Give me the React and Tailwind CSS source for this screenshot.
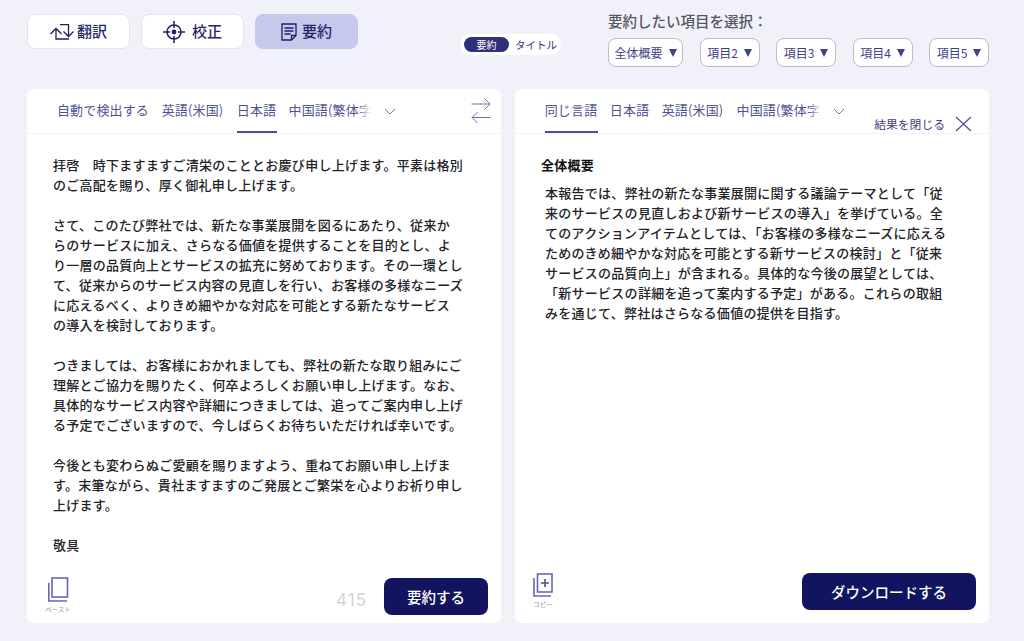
import React from "react";

const FONT = { fontFamily: '"Noto Sans CJK JP", "Inter", sans-serif' };

const leftText = [
  "拝啓　時下ますますご清栄のこととお慶び申し上げます。平素は格別",
  "のご高配を賜り、厚く御礼申し上げます。",
  "",
  "さて、このたび弊社では、新たな事業展開を図るにあたり、従来か",
  "らのサービスに加え、さらなる価値を提供することを目的とし、よ",
  "り一層の品質向上とサービスの拡充に努めております。その一環とし",
  "て、従来からのサービス内容の見直しを行い、お客様の多様なニーズ",
  "に応えるべく、よりきめ細やかな対応を可能とする新たなサービス",
  "の導入を検討しております。",
  "",
  "つきましては、お客様におかれましても、弊社の新たな取り組みにご",
  "理解とご協力を賜りたく、何卒よろしくお願い申し上げます。なお、",
  "具体的なサービス内容や詳細につきましては、追ってご案内申し上げ",
  "る予定でございますので、今しばらくお待ちいただければ幸いです。",
  "",
  "今後とも変わらぬご愛顧を賜りますよう、重ねてお願い申し上げま",
  "す。末筆ながら、貴社ますますのご発展とご繁栄を心よりお祈り申し",
  "上げます。",
  "",
  "敬具",
];

const rightText = [
  "本報告では、弊社の新たな事業展開に関する議論テーマとして「従",
  "来のサービスの見直しおよび新サービスの導入」を挙げている。全",
  "てのアクションアイテムとしては、「お客様の多様なニーズに応える",
  "ためのきめ細やかな対応を可能とする新サービスの検討」と「従来",
  "サービスの品質向上」が含まれる。具体的な今後の展望としては、",
  "「新サービスの詳細を追って案内する予定」がある。これらの取組",
  "みを通じて、弊社はさらなる価値の提供を目指す。",
];

function TranslateIcon() {
  return (
    <svg width="24" height="16" viewBox="0 0 24 16" fill="none" stroke="#1e1f66" strokeWidth="1.3">
      <path d="M0.5 10 L6 4.5 L11.5 10 M6 4.5 V15 H19" />
      <path d="M10 0.7 H18.5 V12 M13.5 7.5 L18.5 12.5 L23.5 7.5" />
    </svg>
  );
}

function TargetIcon() {
  return (
    <svg width="22" height="24" viewBox="0 0 22 24" fill="none" stroke="#1e1f66" strokeWidth="1.5">
      <circle cx="11" cy="12" r="7" />
      <circle cx="11" cy="12" r="2.4" fill="#1e1f66" stroke="none" />
      <path d="M11 1 V8 M11 16 V23 M0 12 H7 M15 12 H22" />
    </svg>
  );
}

function NoteIcon() {
  return (
    <svg width="16" height="18" viewBox="0 0 16 18" fill="none" stroke="#1e1f66" strokeWidth="1.3">
      <path d="M1 1 H15 V12.5 L10.5 17 H1 Z" />
      <path d="M3.5 5 H12.5 M3.5 8 H12.5 M3.5 11 H9.5" />
      <path d="M10.5 17 V12.5 H15" />
    </svg>
  );
}

function Chevron() {
  return (
    <svg width="12" height="7" viewBox="0 0 12 7" fill="none" stroke="#75779f" strokeWidth="1">
      <path d="M1 1 L6 6 L11 1" />
    </svg>
  );
}

function Tab({ children, active, w }) {
  return (
    <div className={`relative h-[44px] pb-[2px] flex items-center justify-center shrink-0 text-[13px] tracking-[0.15px] text-[#4f5391] whitespace-nowrap ${w}`}>
      {children}
      {active && <div className="absolute bottom-0 left-0 right-0 h-[2px] bg-[#4a4e99]" />}
    </div>
  );
}

function Fade({ w }) {
  return (
    <div className={`relative h-[44px] pb-[2px] flex items-center overflow-hidden shrink-0 text-[13px] tracking-[0.15px] text-[#4f5391] whitespace-nowrap ${w}`}>
      <span className="whitespace-nowrap">中国語(繁体字</span>
      <div className="absolute right-0 top-0 bottom-0 w-[14px] bg-gradient-to-r from-transparent to-white" />
    </div>
  );
}

function TopButton({ icon, label, active, gap }) {
  return (
    <button className={`w-[103px] h-[35px] rounded-[8px] flex items-center justify-center ${gap} text-[15px] font-medium text-[#25266b] border ${active ? "bg-[#c6c8ec] border-[#c6c8ec]" : "bg-white border-[#e2e3ec]"}`}>
      {icon}
      <span>{label}</span>
    </button>
  );
}

function Select({ label, w }) {
  return (
    <div className={`h-[29px] rounded-[8px] bg-white border border-[#bcbdc6] flex items-center justify-center gap-[6px] text-[12px] text-[#3f4285] ${w}`}>
      <span className="whitespace-nowrap">{label}</span>
      <span className="w-0 h-0 border-l-[4.5px] border-r-[4.5px] border-t-[8px] border-l-transparent border-r-transparent border-t-[#3f4285]" />
    </div>
  );
}

export default function App() {
  return (
    <div className="w-[1024px] h-[641px] bg-[#f0f1f9] overflow-hidden flex flex-col px-[27px]" style={FONT}>
      <div className="h-[89px] shrink-0 flex">
        <div className="flex gap-[11px] pt-[14px] items-start">
          <TopButton icon={<TranslateIcon />} label="翻訳" gap="gap-[3px]" />
          <TopButton icon={<TargetIcon />} label="校正" gap="gap-[7px]" />
          <TopButton icon={<NoteIcon />} label="要約" gap="gap-[5px]" active />
        </div>
        <div className="ml-[102px] mt-[34px] h-[21px] w-[101px] shrink-0 rounded-full bg-white flex items-center pl-[4px]">
          <div className="w-[45px] h-[15px] rounded-full bg-[#2f3079] text-white text-[10px] flex items-center justify-center">要約</div>
          <div className="ml-[6px] text-[10.5px] text-[#2f3079] whitespace-nowrap">タイトル</div>
        </div>
        <div className="ml-[47px] pt-[10px] w-[381px] shrink-0">
          <div className="text-[14.5px] leading-[21px] font-medium text-[#55565f]">要約したい項目を選択：</div>
          <div className="flex justify-between mt-[7px]">
            <Select label="全体概要" w="w-[75px]" />
            <Select label="項目2" w="w-[60px]" />
            <Select label="項目3" w="w-[60px]" />
            <Select label="項目4" w="w-[60px]" />
            <Select label="項目5" w="w-[60px]" />
          </div>
        </div>
      </div>

      <div className="flex gap-[14px] h-[534px]">
        <div className="w-[474px] bg-white rounded-[8px] flex flex-col relative">
          <div className="h-[45px] shrink-0 border-b border-[#f4f4f8] flex pl-[29.5px]">
            <Tab w="w-[93px]">自動で検出する</Tab>
            <Tab w="w-[62px] ml-[12px]">英語(米国)</Tab>
            <Tab active w="w-[40px] ml-[13px]">日本語</Tab>
            <Fade w="w-[82px] ml-[12px]" />
            <div className="h-[44px] flex items-center ml-[13px]"><Chevron /></div>
            <div className="h-[44px] flex items-center ml-auto mr-[10.5px] pb-[1px]">
              <svg width="20" height="26" viewBox="0 0 20 26" fill="none" stroke="#6d70ad" strokeWidth="1">
                <path d="M0.5 6 H19 M13.5 0.5 L19 6 L13.5 11.5 M19.5 19.5 H1 M6.5 14 L1 19.5 L6.5 25" />
              </svg>
            </div>
          </div>
          <div className="flex-1 pl-[26px] pt-[21px] text-[13px] leading-[20px] tracking-[0.27px] text-[#222228] font-medium overflow-hidden">
            {leftText.map((l, i) => (
              <div key={i} className="h-[20px] whitespace-pre">{l}</div>
            ))}
          </div>
          <div className="h-[60px] shrink-0 flex items-start pl-[18px] pr-[13px]">
            <div className="flex flex-col items-center w-[26px] mt-[14px]">
              <svg width="22" height="25" viewBox="0 0 22 25" fill="none" stroke="#6668ad" strokeWidth="1.6">
                <rect x="5" y="1" width="15.5" height="19" />
                <path d="M1.8 6 V24 H20" />
              </svg>
              <span className="text-[6.5px] leading-[10px] mt-[2px] text-[#9a9aa2] whitespace-nowrap">ペースト</span>
            </div>
            <div className="ml-auto mt-[25px] text-[17px] leading-[24px] text-[#d2d3d8] tracking-[1px]" style={{ fontFamily: "Inter, sans-serif" }}>415</div>
            <button className="ml-[17px] mt-[15px] w-[104px] h-[37px] rounded-[8px] bg-[#13145f] text-white text-[14.5px] font-medium">要約する</button>
          </div>
        </div>

        <div className="w-[474px] bg-white rounded-[8px] flex flex-col relative">
          <div className="h-[45px] shrink-0 border-b border-[#f4f4f8] flex pl-[29.5px]">
            <Tab active w="w-[53px]">同じ言語</Tab>
            <Tab w="w-[40px] ml-[12px]">日本語</Tab>
            <Tab w="w-[62px] ml-[12px]">英語(米国)</Tab>
            <Fade w="w-[85px] ml-[13px]" />
            <div className="h-[44px] flex items-center ml-[11px]"><Chevron /></div>
            <div className="ml-auto mr-[17px] mt-[25px] flex items-center h-[20px] gap-[10px]">
              <span className="text-[11.8px] text-[#3f4285] whitespace-nowrap">結果を閉じる</span>
              <svg width="17" height="16" viewBox="0 0 17 16" fill="none" stroke="#4f5391" strokeWidth="1.2">
                <path d="M1 1 L16 15 M16 1 L1 15" />
              </svg>
            </div>
          </div>
          <div className="flex-1 pt-[21px] pl-[26px] text-[13px] leading-[20px] tracking-[0.27px] text-[#222228] font-medium overflow-hidden">
            <div className="font-bold text-[#111]">全体概要</div>
            <div className="pl-[4px] mt-[8px]">
              {rightText.map((l, i) => (
                <div key={i} className="h-[20px] whitespace-pre">{l}</div>
              ))}
            </div>
          </div>
          <div className="h-[60px] shrink-0 flex items-start pl-[16px] pr-[13px]">
            <div className="flex flex-col items-center w-[24px] mt-[10px]">
              <svg width="20" height="24" viewBox="0 0 20 24" fill="none" stroke="#6668ad" strokeWidth="1.6">
                <rect x="4.5" y="1" width="14.5" height="18" />
                <path d="M1 5 V23 H18" />
                <path d="M12 6 V14 M8 10 H16" stroke="#4a4e99" strokeWidth="1.6" />
              </svg>
              <span className="text-[6.5px] leading-[10px] mt-[2px] text-[#9a9aa2] whitespace-nowrap">コピー</span>
            </div>
            <button className="ml-auto mt-[10px] w-[174px] h-[37px] rounded-[8px] bg-[#13145f] text-white text-[14.5px] font-medium">ダウンロードする</button>
          </div>
        </div>
      </div>
    </div>
  );
}
